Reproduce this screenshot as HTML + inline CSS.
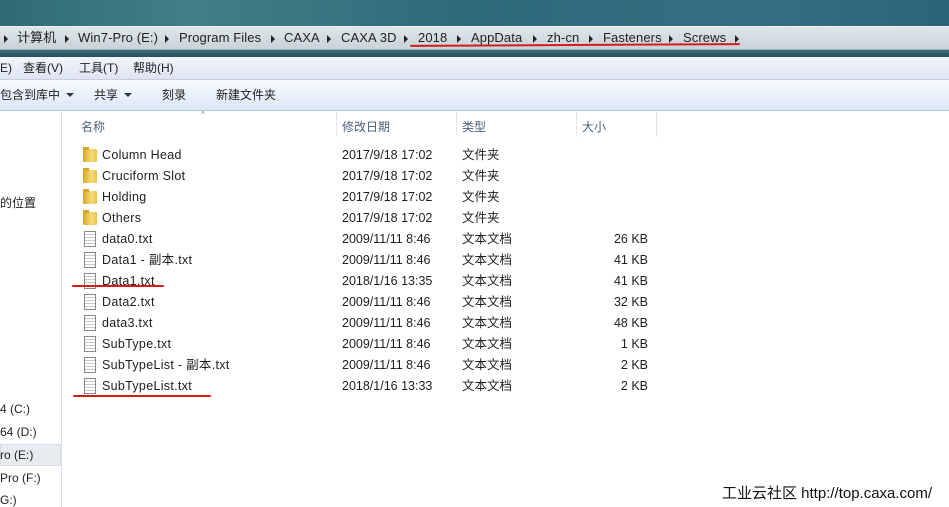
<!DOCTYPE html>
<html><head><meta charset="utf-8"><style>
*{margin:0;padding:0;box-sizing:border-box}
body{width:949px;height:507px;overflow:hidden;background:#fff;font-family:"Liberation Sans","Noto Sans CJK SC",sans-serif;font-size:12px;color:#1e1e1e;position:relative}
.abs{position:absolute;white-space:nowrap}
#title{left:0;top:0;width:949px;height:26px;background:linear-gradient(90deg,#2f6b76,#3f7f87 20%,#2d6a7a 50%,#356f82 80%,#2b6477)}
#addr{left:0;top:26px;width:949px;height:24px;background:linear-gradient(#dfe6ea,#c9d3d8);border-top:1px solid #eef;border-bottom:1px solid #9fb0b8;font-size:13px;color:#222;line-height:22px}
#addr span{position:absolute;top:0;letter-spacing:.1px}
#band{left:0;top:50px;width:949px;height:7px;background:linear-gradient(#3c6e7a,#294f5c)}
#menu{left:0;top:57px;width:949px;height:23px;background:linear-gradient(#f3f5fb,#dfe4f2);border-bottom:1px solid #c5cde0;line-height:23px}
#tool{left:0;top:80px;width:949px;height:31px;background:linear-gradient(#f8fbfe,#e9f1fb 50%,#dbe7f5);border-bottom:1px solid #b9c9dc;line-height:30px}
#nav{left:0;top:111px;width:62px;height:396px;background:#fff;border-right:1px solid #d8e0ea}
.tri{position:absolute;top:8px;width:0;height:0;border-left:4px solid #222;border-top:4px solid transparent;border-bottom:4px solid transparent}
.dd{display:inline-block;width:0;height:0;border-top:4px solid #333;border-left:4px solid transparent;border-right:4px solid transparent;margin-left:6px;vertical-align:2px}
.hdr{top:118px;color:#4c607a;font-size:12px}
.sep{top:111px;width:1px;height:26px;background:#e2e7ee}
.row{left:80px;height:21px;line-height:21px;width:580px;font-size:12.5px}
.row span{position:absolute}
.row span.n{letter-spacing:0.3px}
.fold{position:absolute;left:3px;top:4px;width:14px;height:13px;background:linear-gradient(90deg,#d9a520,#f6dc79 60%,#e8c34a);border-radius:1px}
.fold:before{content:"";position:absolute;left:0;top:-2px;width:6px;height:3px;background:#d9a520}
.file{position:absolute;left:4px;top:2px;width:12px;height:16px;border:1px solid #888;background:repeating-linear-gradient(#fff 0 2px,#c8c8c8 2px 3px);background-color:#fff}
.red{position:absolute;height:2px;background:#d21c1c;border-radius:2px}
</style></head><body>
<div class="abs" id="title"></div>
<div class="abs" id="addr">
<i class="tri" style="left:4px"></i><span style="left:17px">计算机</span>
<i class="tri" style="left:65px"></i><span style="left:78px">Win7-Pro (E:)</span>
<i class="tri" style="left:165px"></i><span style="left:179px">Program Files</span>
<i class="tri" style="left:271px"></i><span style="left:284px">CAXA</span>
<i class="tri" style="left:327px"></i><span style="left:341px">CAXA 3D</span>
<i class="tri" style="left:404px"></i><span style="left:418px">2018</span>
<i class="tri" style="left:457px"></i><span style="left:471px">AppData</span>
<i class="tri" style="left:533px"></i><span style="left:547px">zh-cn</span>
<i class="tri" style="left:589px"></i><span style="left:603px">Fasteners</span>
<i class="tri" style="left:669px"></i><span style="left:683px">Screws</span>
<i class="tri" style="left:735px"></i>
</div>
<div class="red" style="left:410px;top:44px;width:330px;transform:rotate(-0.3deg)"></div>
<div class="abs" id="band"></div>
<div class="abs" id="menu"><span style="position:absolute;left:0">E)</span><span style="position:absolute;left:23px">查看(V)</span><span style="position:absolute;left:79px">工具(T)</span><span style="position:absolute;left:133px">帮助(H)</span></div>
<div class="abs" id="tool"><span style="position:absolute;left:0">包含到库中<i class="dd"></i></span><span style="position:absolute;left:94px">共享<i class="dd"></i></span><span style="position:absolute;left:162px">刻录</span><span style="position:absolute;left:216px">新建文件夹</span></div>
<div class="abs" id="nav">
<div class="abs" style="left:0;top:83px">的位置</div>
<div class="abs" style="left:0;top:291px">4 (C:)</div>
<div class="abs" style="left:0;top:314px">64 (D:)</div>
<div class="abs" style="left:0;top:333px;width:61px;height:22px;background:#e8ecf1;border:1px solid #d6dde6"></div>
<div class="abs" style="left:0;top:337px">ro (E:)</div>
<div class="abs" style="left:0;top:360px">Pro (F:)</div>
<div class="abs" style="left:0;top:382px">G:)</div>
</div>
<div class="abs hdr" style="left:81px">名称</div>
<div class="abs" style="left:201px;top:110px;font-size:8px;color:#789">^</div>
<div class="abs hdr" style="left:342px">修改日期</div>
<div class="abs hdr" style="left:462px">类型</div>
<div class="abs hdr" style="left:582px">大小</div>
<div class="abs sep" style="left:336px"></div><div class="abs sep" style="left:456px"></div><div class="abs sep" style="left:576px"></div><div class="abs sep" style="left:656px"></div>

<div class="abs row" style="top:145px"><i class="fold"></i><span class="n" style="left:22px">Column Head</span><span style="left:262px">2017/9/18 17:02</span><span style="left:382px">文件夹</span></div>
<div class="abs row" style="top:166px"><i class="fold"></i><span class="n" style="left:22px">Cruciform Slot</span><span style="left:262px">2017/9/18 17:02</span><span style="left:382px">文件夹</span></div>
<div class="abs row" style="top:187px"><i class="fold"></i><span class="n" style="left:22px">Holding</span><span style="left:262px">2017/9/18 17:02</span><span style="left:382px">文件夹</span></div>
<div class="abs row" style="top:208px"><i class="fold"></i><span class="n" style="left:22px">Others</span><span style="left:262px">2017/9/18 17:02</span><span style="left:382px">文件夹</span></div>
<div class="abs row" style="top:229px"><i class="file"></i><span class="n" style="left:22px">data0.txt</span><span style="left:262px">2009/11/11 8:46</span><span style="left:382px">文本文档</span><span style="right:12px">26 KB</span></div>
<div class="abs row" style="top:250px"><i class="file"></i><span class="n" style="left:22px">Data1 - 副本.txt</span><span style="left:262px">2009/11/11 8:46</span><span style="left:382px">文本文档</span><span style="right:12px">41 KB</span></div>
<div class="abs row" style="top:271px"><i class="file"></i><span class="n" style="left:22px">Data1.txt</span><span style="left:262px">2018/1/16 13:35</span><span style="left:382px">文本文档</span><span style="right:12px">41 KB</span></div>
<div class="abs row" style="top:292px"><i class="file"></i><span class="n" style="left:22px">Data2.txt</span><span style="left:262px">2009/11/11 8:46</span><span style="left:382px">文本文档</span><span style="right:12px">32 KB</span></div>
<div class="abs row" style="top:313px"><i class="file"></i><span class="n" style="left:22px">data3.txt</span><span style="left:262px">2009/11/11 8:46</span><span style="left:382px">文本文档</span><span style="right:12px">48 KB</span></div>
<div class="abs row" style="top:334px"><i class="file"></i><span class="n" style="left:22px">SubType.txt</span><span style="left:262px">2009/11/11 8:46</span><span style="left:382px">文本文档</span><span style="right:12px">1 KB</span></div>
<div class="abs row" style="top:355px"><i class="file"></i><span class="n" style="left:22px">SubTypeList - 副本.txt</span><span style="left:262px">2009/11/11 8:46</span><span style="left:382px">文本文档</span><span style="right:12px">2 KB</span></div>
<div class="abs row" style="top:376px"><i class="file"></i><span class="n" style="left:22px">SubTypeList.txt</span><span style="left:262px">2018/1/16 13:33</span><span style="left:382px">文本文档</span><span style="right:12px">2 KB</span></div>
<div class="red" style="left:72px;top:285px;width:92px"></div>
<div class="red" style="left:73px;top:395px;width:138px"></div>
<div class="abs" style="left:722px;top:482px;font-size:15px;color:#111">工业云社区 http://top.caxa.com/</div>
</body></html>
